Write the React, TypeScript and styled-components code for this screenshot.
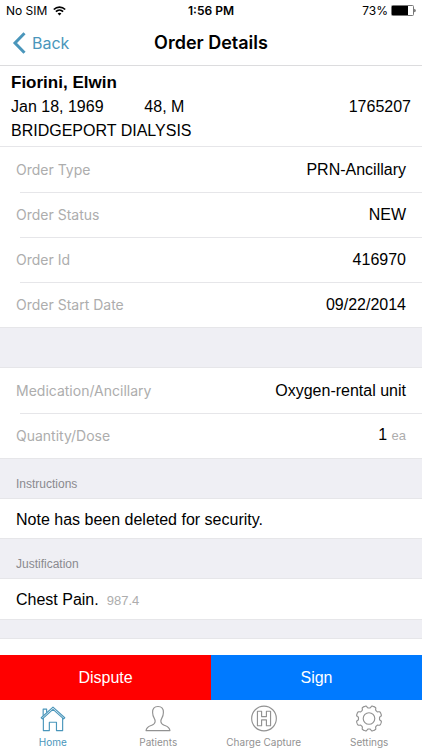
import React from "react";
import styled, { createGlobalStyle } from "styled-components";

const ui = `Inter, "Helvetica Neue", sans-serif`;
const body = `"Liberation Sans", Helvetica, Arial, sans-serif`;
const accent = "#4a96bb";
const line = "#e6e6e9";

const GlobalStyle = createGlobalStyle`
  *, *::before, *::after { box-sizing: border-box; }
  body { margin: 0; background: #fff; color: #000; font-family: ${body}; }
  h1, h2, p, dl, dt, dd { margin: 0; font-weight: 400; }
  button { border: 0; padding: 0; background: none; cursor: pointer; }
`;

const Screen = styled.div`
  display: flex;
  flex-direction: column;
  min-height: 100vh;
`;

const Columns = styled.div`
  display: grid;
  grid-template-columns: 1fr auto 1fr;
  align-items: center;
`;

const StatusBar = styled(Columns)`
  height: 21px;
  padding: 0 6px;
  font: 400 12px/20px ${ui};
`;

const StatusGroup = styled.div<{ $end?: boolean }>`
  display: flex;
  align-items: center;
  gap: ${(p) => (p.$end ? 3 : 6)}px;
  justify-self: ${(p) => (p.$end ? "end" : "start")};
`;

const Clock = styled.time`
  font-weight: 600;
`;

const NavBar = styled(Columns)`
  height: 45px;
  padding: 0 12px;
  border-bottom: 1px solid #dcdcde;
`;

const BackLink = styled.a`
  display: flex;
  align-items: center;
  gap: 6px;
  justify-self: start;
  color: ${accent};
  font: 400 16px/24px ${ui};
  text-decoration: none;
`;

const Title = styled.h1`
  font: 600 18px/24px ${ui};
`;

const Main = styled.main`
  flex: 1;
`;

const Patient = styled.section`
  padding: 4px 11px 3px;
  border-bottom: 1px solid ${line};
  font-size: 16px;
  line-height: 24px;
`;

const PatientName = styled.h2`
  font-size: 17px;
  font-weight: 700;
  line-height: 25px;
`;

const PatientFacts = styled.div`
  display: grid;
  grid-template-columns: 1fr 1fr 1fr;
`;

const Fact = styled.span<{ $end?: boolean }>`
  text-align: ${(p) => (p.$end ? "right" : "left")};
`;

const Rows = styled.dl`
  display: flex;
  flex-direction: column;
`;

const Row = styled.div`
  position: relative;
  display: flex;
  align-items: center;
  justify-content: space-between;
  height: 45px;
  padding: 0 16px;

  & + &::before {
    content: "";
    position: absolute;
    top: 0;
    right: 0;
    left: 20px;
    border-top: 1px solid ${line};
  }
`;

const Label = styled.dt`
  color: #adadad;
  font: 400 14px/20px ${ui};
`;

const Value = styled.dd`
  font-size: 16px;
  line-height: 20px;
`;

const Small = styled.small`
  color: #adadad;
  font-size: 13px;
`;

const Band = styled.h2<{ $short?: boolean }>`
  display: flex;
  align-items: flex-end;
  height: ${(p) => (p.$short ? 20 : 41)}px;
  padding: 0 16px 5px;
  border: solid ${line};
  border-width: 1px 0;
  background: #efeff4;
  color: #8a8a8f;
  font-size: 12px;
  line-height: 18px;
`;

const Note = styled.p`
  display: flex;
  align-items: baseline;
  gap: 8px;
  padding: 11px 16px 8px;
  font-size: 16px;
  line-height: 20px;
`;

const Footer = styled.footer`
  position: sticky;
  bottom: 0;
  background: #fff;
`;

const Actions = styled.div`
  display: grid;
  grid-template-columns: 1fr 1fr;
`;

const Action = styled.button<{ $color: string }>`
  height: 45px;
  && { background: ${(p) => p.$color}; }
  color: #fff;
  font: 400 16px/20px ${body};
`;

const TabBar = styled.nav`
  display: grid;
  grid-template-columns: repeat(4, 1fr);
`;

const Tab = styled.a<{ $active?: boolean }>`
  display: flex;
  flex-direction: column;
  align-items: center;
  gap: 2px;
  height: 50px;
  padding-top: 5px;
  color: ${(p) => (p.$active ? accent : "#929292")};
  font: 400 10px/16px ${ui};
  text-decoration: none;
  white-space: nowrap;
`;

const TabIcon = styled.svg`
  width: 28px;
  height: 28px;
  fill: none;
  stroke: currentColor;
  stroke-width: 1.2;
  stroke-linejoin: round;
`;

const gearPath =
  Array.from({ length: 144 }, (_, i) => {
    const a = (i / 144) * Math.PI * 2;
    const r = 12.1 - 1.2 * Math.tanh(3 * Math.cos(8 * a) - 0.6);
    const x = (14 + r * Math.cos(a)).toFixed(2);
    const y = (14 + r * Math.sin(a)).toFixed(2);
    return `${i ? "L" : "M"}${x} ${y}`;
  }).join("") + "Z";

const tabs = [
  {
    name: "Home",
    active: true,
    icon: (
      <>
        <path d="M1.800 13.200 14 2.200l12.200 11-1.200 1.200L14 4.600 3 14.400Z" />
        <path d="M4 13.600V26.500h6.200v-8.600h7.400v8.600H24V13.600" />
        <path d="M3.800 11.200V4.300h3.600v3.600" />
      </>
    ),
  },
  {
    name: "Patients",
    icon: (
      <path d="M14 1.600c-4 0-5.800 2.500-5.600 6.200.1 2.800.7 4.300 1.500 5.600.9 1.500 1.300 2.200 1.100 4-.2 2-1.200 2.800-3.400 3.600-3.200 1.200-5.500 1.700-6 5.500h24.800c-.5-3.800-2.800-4.300-6-5.500-2.200-.8-3.200-1.600-3.400-3.600-.2-1.800.2-2.500 1.100-4 .8-1.300 1.400-2.800 1.500-5.600.2-3.700-1.600-6.200-5.600-6.200Z" />
    ),
  },
  {
    name: "Charge Capture",
    icon: (
      <>
        <circle cx="14" cy="14" r="12.800" />
        <path d="M7.200 6.500h4.300v5.500h5V6.500h4.300v15h-4.300v-6h-5v6H7.200Z" />
      </>
    ),
  },
  {
    name: "Settings",
    icon: (
      <>
        <path d={gearPath} />
        <circle cx="14" cy="14" r="6" />
      </>
    ),
  },
];

const order: [string, string][] = [
  ["Order Type", "PRN-Ancillary"],
  ["Order Status", "NEW"],
  ["Order Id", "416970"],
  ["Order Start Date", "09/22/2014"],
];

export default function App() {
  return (
    <Screen>
      <GlobalStyle />
      <StatusBar>
        <StatusGroup>
          No SIM
          <svg width="13" height="10" viewBox="0 0 13 10" fill="none" stroke="#000" strokeWidth="1.700" aria-hidden="true">
            <path d="M.8 3.500C4 .4 9 .4 12.200 3.500M2.900 5.700c2-2 5.200-2 7.200 0" />
            <path d="M4.600 7.600c1.100-1 2.700-1 3.800 0L6.500 9.500Z" fill="#000" stroke="none" />
          </svg>
        </StatusGroup>
        <Clock>1:56 PM</Clock>
        <StatusGroup $end>
          73%
          <svg width="25" height="11" viewBox="0 0 25 11" aria-hidden="true">
            <rect x=".5" y=".5" width="22" height="10" rx="1" fill="#fff" stroke="#777" />
            <rect x="1" y="1" width="16" height="9" />
            <path d="M23.500 3.700c1.300.5 1.300 3.100 0 3.600Z" />
          </svg>
        </StatusGroup>
      </StatusBar>
      <NavBar as="header">
        <BackLink href="#back">
          <svg width="14" height="22" viewBox="0 0 14 22" fill="none" stroke="currentColor" strokeWidth="3" aria-hidden="true">
            <path d="M12.500 1.200 3 11l9.500 9.800" />
          </svg>
          Back
        </BackLink>
        <Title>Order Details</Title>
      </NavBar>
      <Main>
        <Patient>
          <PatientName>Fiorini, Elwin</PatientName>
          <PatientFacts>
            <Fact>Jan 18, 1969</Fact>
            <Fact>48, M</Fact>
            <Fact $end>1765207</Fact>
          </PatientFacts>
          <p>BRIDGEPORT DIALYSIS</p>
        </Patient>
        <Rows>
          {order.map(([label, value]) => (
            <Row key={label}>
              <Label>{label}</Label>
              <Value>{value}</Value>
            </Row>
          ))}
        </Rows>
        <Band as="div" />
        <Rows>
          <Row>
            <Label>Medication/Ancillary</Label>
            <Value>Oxygen-rental unit</Value>
          </Row>
          <Row>
            <Label>Quantity/Dose</Label>
            <Value>
              1 <Small>ea</Small>
            </Value>
          </Row>
        </Rows>
        <Band>Instructions</Band>
        <Note>Note has been deleted for security.</Note>
        <Band>Justification</Band>
        <Note>
          Chest Pain. <Small>987.4</Small>
        </Note>
        <Band as="div" $short />
      </Main>
      <Footer>
        <Actions>
          <Action type="button" $color="#ff0000">Dispute</Action>
          <Action type="button" $color="#007aff">Sign</Action>
        </Actions>
        <TabBar>
          {tabs.map((tab) => (
            <Tab key={tab.name} href={`#${tab.name.toLowerCase().replace(" ", "-")}`} $active={tab.active}>
              <TabIcon viewBox="0 0 28 28" aria-hidden="true">{tab.icon}</TabIcon>
              {tab.name}
            </Tab>
          ))}
        </TabBar>
      </Footer>
    </Screen>
  );
}
